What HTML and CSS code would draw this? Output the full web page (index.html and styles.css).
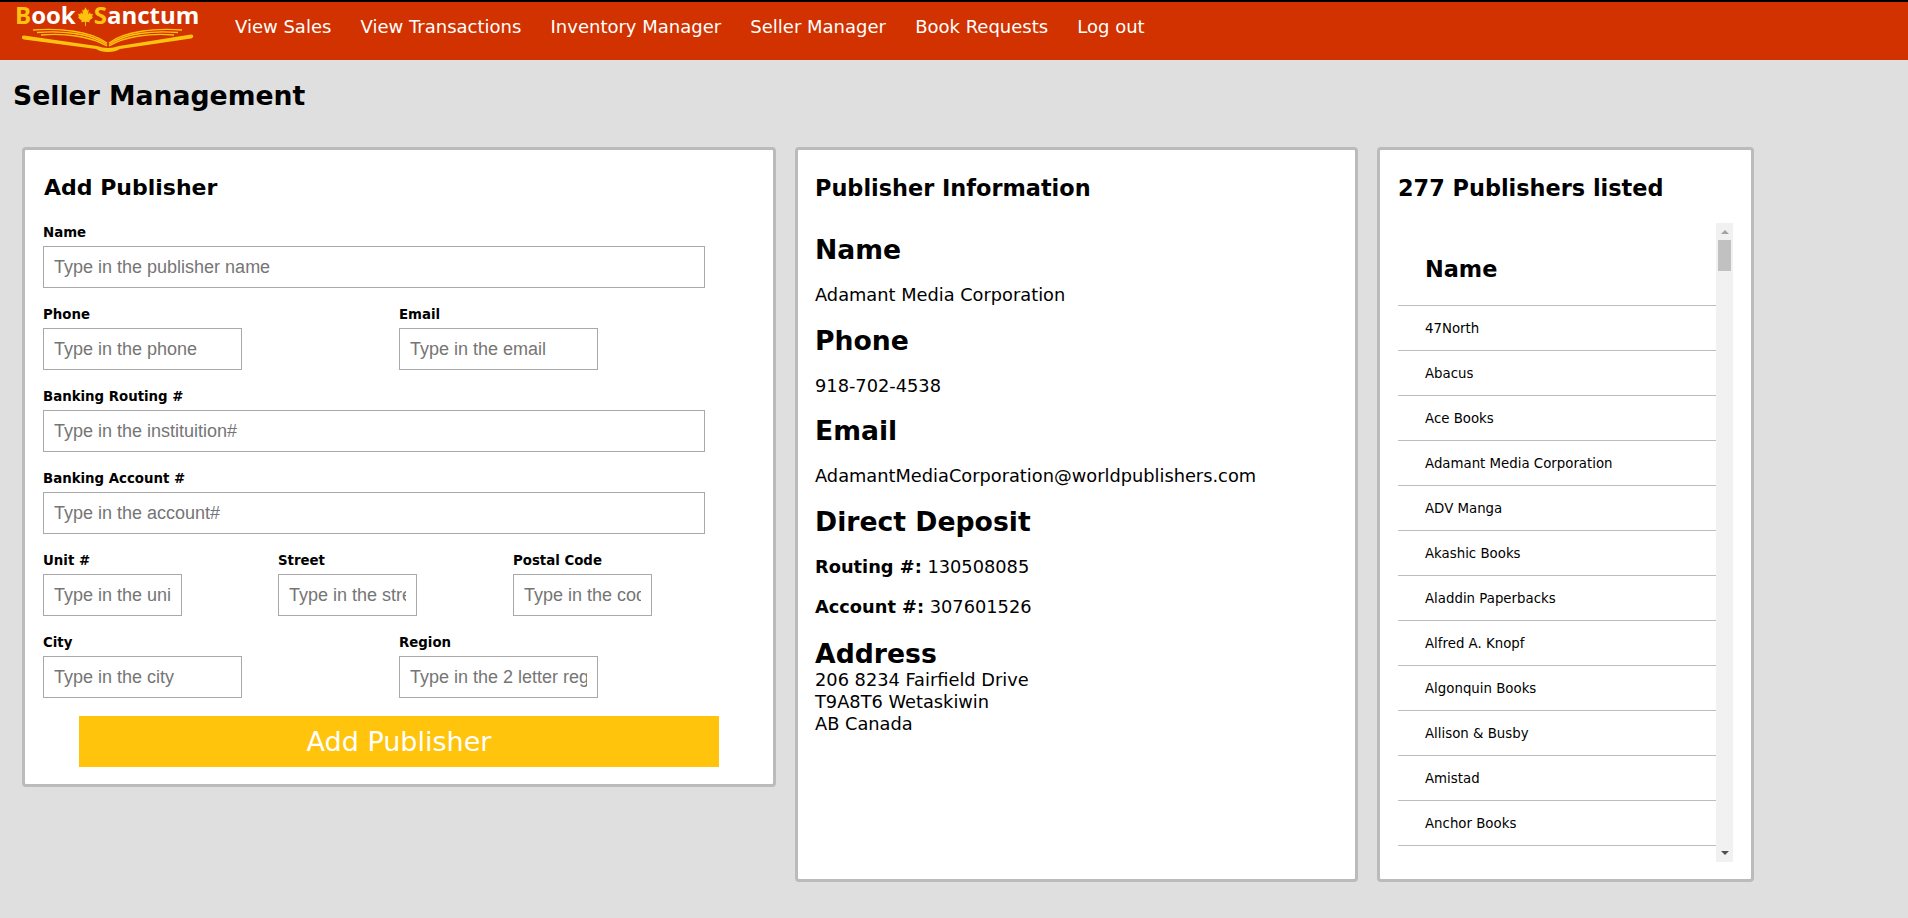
FILE: index.html
```html
<!DOCTYPE html>
<html lang="en">
<head>
    <meta charset="UTF-8">
    <title>Seller Management</title>
    <link rel="stylesheet" href="styles.css">
</head>
<body>

<header class="topbar">
    <a class="logo" href="#">
        <span class="logo-text"><span class="gold">B</span>ook<svg class="leaf" viewBox="0 0 16 20"><polygon points="8,0 9.8,3.5 11.5,2.5 10.8,7.5 13,5.5 13.5,7.5 16,7 15,10 16,11 12,14.5 12.5,16 8.5,15.5 8.5,20 7.5,20 7.5,15.5 3.5,16 4,14.5 0,11 1,10 0,7 2.5,7.5 3,5.5 5.2,7.5 4.5,2.5 6.2,3.5"/></svg><span class="gold">S</span>anctum</span>
        <svg class="book" viewBox="22 26 172 26">
            <g fill="none" stroke="#ffc20e" stroke-width="1.4">
                <path d="M33 29 C60 27 90 30 107 42"/>
                <path d="M37 31.5 C62 29.5 90 32 107 43.5"/>
                <path d="M41 34 C64 32 90 35 107 45"/>
                <path d="M182 29 C155 27 125 30 109 42"/>
                <path d="M178 31.5 C153 29.5 125 32 109 43.5"/>
                <path d="M174 34 C151 32 125 35 109 45"/>
            </g>
            <path fill="#ffc20e" d="M24 34.5 L97 45 C101 46 104 47 108 47 C112 47 115 46 119 45 L191 33.5 C194 33.5 194 36.5 191 37.5 L120 48 C117 50 113 51 108 51 C103 51 99 50 96 48 L24 38.5 C21 38 21 34.5 24 34.5 Z"/>
        </svg>
    </a>
    <nav class="menu">
        <a href="#">View Sales</a>
        <a href="#">View Transactions</a>
        <a href="#">Inventory Manager</a>
        <a href="#">Seller Manager</a>
        <a href="#">Book Requests</a>
        <a href="#">Log out</a>
    </nav>
</header>

<h1 class="page-title">Seller Management</h1>

<main class="panels">
    <section class="panel panel-add">
        <h3>Add Publisher</h3>
        <form>
            <div class="row">
                <div class="field field-wide">
                    <label for="name">Name</label>
                    <input id="name" type="text" placeholder="Type in the publisher name">
                </div>
            </div>
            <div class="row row-2">
                <div class="field">
                    <label for="phone">Phone</label>
                    <input id="phone" type="text" placeholder="Type in the phone">
                </div>
                <div class="field">
                    <label for="email">Email</label>
                    <input id="email" type="text" placeholder="Type in the email">
                </div>
            </div>
            <div class="row">
                <div class="field field-wide">
                    <label for="routing">Banking Routing #</label>
                    <input id="routing" type="text" placeholder="Type in the instituition#">
                </div>
            </div>
            <div class="row">
                <div class="field field-wide">
                    <label for="account">Banking Account #</label>
                    <input id="account" type="text" placeholder="Type in the account#">
                </div>
            </div>
            <div class="row row-3">
                <div class="field">
                    <label for="unit">Unit #</label>
                    <input id="unit" type="text" placeholder="Type in the unit">
                </div>
                <div class="field">
                    <label for="street">Street</label>
                    <input id="street" type="text" placeholder="Type in the street">
                </div>
                <div class="field">
                    <label for="postal">Postal Code</label>
                    <input id="postal" type="text" placeholder="Type in the code">
                </div>
            </div>
            <div class="row row-2">
                <div class="field">
                    <label for="city">City</label>
                    <input id="city" type="text" placeholder="Type in the city">
                </div>
                <div class="field">
                    <label for="region">Region</label>
                    <input id="region" type="text" placeholder="Type in the 2 letter region">
                </div>
            </div>
            <button class="add-btn" type="button">Add Publisher</button>
        </form>
    </section>

    <section class="panel panel-info">
        <h3>Publisher Information</h3>
        <h2>Name</h2>
        <p>Adamant Media Corporation</p>
        <h2>Phone</h2>
        <p>918-702-4538</p>
        <h2>Email</h2>
        <p>AdamantMediaCorporation@worldpublishers.com</p>
        <h2>Direct Deposit</h2>
        <p><b>Routing #:</b> 130508085</p>
        <p><b>Account #:</b> 307601526</p>
        <h2 class="address-head">Address</h2>
        <div class="address">206 8234 Fairfield Drive<br>T9A8T6 Wetaskiwin<br>AB Canada</div>
    </section>

    <section class="panel panel-list">
        <h3>277 Publishers listed</h3>
        <div class="list-wrap">
            <div class="list-scroll">
                <table class="list">
                    <thead>
                        <tr><th>Name</th></tr>
                    </thead>
                    <tbody>
                        <tr><td>47North</td></tr>
                        <tr><td>Abacus</td></tr>
                        <tr><td>Ace Books</td></tr>
                        <tr><td>Adamant Media Corporation</td></tr>
                        <tr><td>ADV Manga</td></tr>
                        <tr><td>Akashic Books</td></tr>
                        <tr><td>Aladdin Paperbacks</td></tr>
                        <tr><td>Alfred A. Knopf</td></tr>
                        <tr><td>Algonquin Books</td></tr>
                        <tr><td>Allison &amp; Busby</td></tr>
                        <tr><td>Amistad</td></tr>
                        <tr><td>Anchor Books</td></tr>
                    </tbody>
                </table>
            </div>
            <div class="scrollbar">
                <div class="sb-btn sb-up"></div>
                <div class="sb-thumb"></div>
                <div class="sb-btn sb-down"></div>
            </div>
        </div>
    </section>
</main>

</body>
</html>
```

FILE: styles.css
```css
* {
    box-sizing: border-box;
}
body {
    margin: 0;
    background: #dfdfdf;
    color: #000;
    font-family: "DejaVu Sans", Verdana, sans-serif;
}

/* top bar */
.topbar {
    display: flex;
    height: 60px;
    background: #d13200;
    border-top: 2px solid #000;
}
.logo {
    display: block;
    width: 235px;
    padding: 0 0 0 15px;
    text-decoration: none;
}
.logo-text {
    display: block;
    height: 25px;
    color: #fff;
    font-family: "Open Sans", sans-serif;
    font-size: 24px;
    font-weight: 700;
    line-height: 25px;
    white-space: nowrap;
}
.gold {
    color: #ffc20e;
}
.leaf {
    width: 15px;
    height: 19px;
    margin: 0 1px 0 2px;
    fill: #ffc20e;
    vertical-align: -2px;
}
.book {
    display: block;
    width: 172px;
    height: 26px;
    margin-left: 7px;
}
.menu {
    display: flex;
    gap: 29.2px;
    padding-top: 13px;
}
.menu a {
    color: #fff;
    font-size: 18px;
    line-height: 24px;
    text-decoration: none;
    white-space: nowrap;
}

.page-title {
    margin: 0;
    padding: 20px 0 0 13px;
    height: 87px;
    font-size: 26.67px;
    line-height: 32px;
}

/* panels */
.panels {
    display: flex;
    align-items: flex-start;
    gap: 19px;
    padding-left: 22px;
}
.panel {
    height: 735px;
    padding: 0 18px;
    background: #fff;
    border: 3px solid #bbb;
    border-radius: 4px;
}
.panel h3 {
    margin: 0;
    padding-top: 24px;
    font-size: 22.4px;
    line-height: 28px;
}
.panel-add {
    width: 754px;
    height: 640px;
}
.panel-add h3 {
    padding-left: 1px;
    font-size: 22px;
}
.panel-info {
    width: 563px;
    padding-left: 17px;
}
.panel-list {
    width: 377px;
}

/* form */
.panel-add form {
    padding-top: 20px;
}
.row {
    display: grid;
    height: 82px;
}
.row-2 {
    grid-template-columns: repeat(2, 1fr);
}
.row-3 {
    grid-template-columns: repeat(3, 235px);
}
.field label {
    display: block;
    height: 24px;
    padding-top: 1px;
    font-size: 13.33px;
    font-weight: 700;
    line-height: 20px;
}
.field input {
    display: block;
    width: 199px;
    height: 42px;
    padding: 0 10px;
    border: 1px solid #a9a9a9;
    font-family: "Liberation Sans", Arial, sans-serif;
    font-size: 18px;
}
.row-3 .field input {
    width: 139px;
}
.field-wide input {
    width: 662px;
}
.add-btn {
    display: block;
    width: 640px;
    height: 51px;
    margin: 2px auto 0;
    background: #ffc40b;
    border: 0;
    color: #fff;
    font-family: "DejaVu Sans", Verdana, sans-serif;
    font-size: 27px;
}

/* publisher details */
.panel-info h3 {
    margin-bottom: 32px;
}
.panel-info h2 {
    margin: 0;
    font-size: 26.67px;
    line-height: 32px;
}
.panel-info p {
    margin: 19px 0 19.5px;
    font-size: 17.8px;
    line-height: 20px;
}
.panel-info p + p {
    margin-top: 20px;
}
.panel-info .address-head {
    margin-top: 22px;
    line-height: 30px;
}
.address {
    font-size: 17.8px;
    line-height: 22px;
}

/* publisher list */
.list-wrap {
    display: flex;
    height: 639px;
    margin-top: 21px;
}
.list-scroll {
    flex: 1;
    overflow: hidden;
}
.scrollbar {
    display: flex;
    flex-direction: column;
    align-items: center;
    width: 17px;
    background: #f1f1f1;
}
.sb-btn {
    display: flex;
    justify-content: center;
    width: 17px;
    height: 17px;
}
.sb-btn::before {
    content: "";
    width: 0;
    height: 0;
    border-left: 4px solid transparent;
    border-right: 4px solid transparent;
}
.sb-up {
    padding-top: 7px;
}
.sb-up::before {
    border-bottom: 4px solid #a3a3a3;
}
.sb-down {
    margin-top: auto;
    padding-top: 6px;
}
.sb-down::before {
    border-top: 4px solid #505050;
}
.sb-thumb {
    width: 13px;
    height: 31px;
    background: #c1c1c1;
}
.list {
    width: 100%;
    border-collapse: collapse;
}
.list th {
    height: 82px;
    padding: 10px 0 0 27px;
    border-bottom: 1px solid #bdbdbd;
    font-size: 22.4px;
    text-align: left;
}
.list td {
    height: 45px;
    padding: 1px 0 0 27px;
    border-bottom: 1px solid #bdbdbd;
    font-size: 13.33px;
}
```
